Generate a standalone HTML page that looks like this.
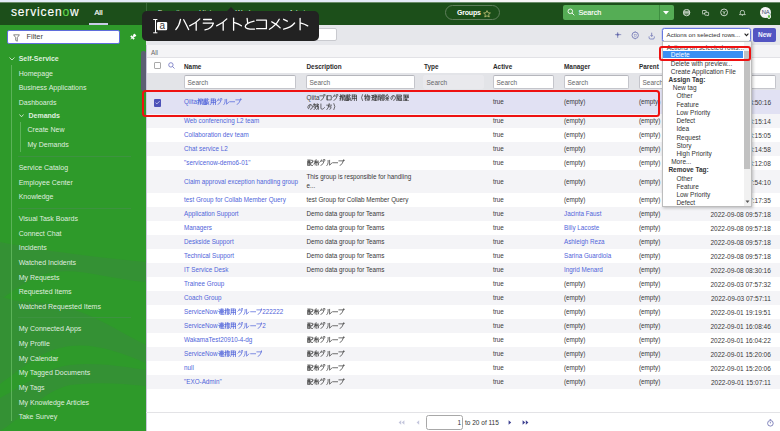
<!DOCTYPE html>
<html><head><meta charset="utf-8">
<style>
*{margin:0;padding:0;box-sizing:border-box}
html,body{width:780px;height:431px;overflow:hidden;background:#fff;font-family:"Liberation Sans",sans-serif}
.a{position:absolute;white-space:nowrap}
#top{left:0;top:0;width:780px;height:2px;background:linear-gradient(90deg,#e5ecf8 0,#e5ecf8 460px,#f7f7f7 460px)}
#hdr{left:0;top:2px;width:780px;height:23px;background:#1c4f1a}
#side{left:0;top:25px;width:146px;height:406px;background:#2e9a2a;overflow:hidden}
.si{position:absolute;left:18.7px;margin-top:.7px;font-size:7px;color:rgba(255,255,255,.86);white-space:nowrap;line-height:8px}
#content{left:146px;top:25px;width:634px;height:406px;background:#fff}
.row{position:absolute;left:0;width:634px;height:14px}
.alt{background:#f4f4f7}
.t{position:absolute;font-size:6.3px;letter-spacing:0px;margin-top:.3px;color:#383838;white-space:nowrap;line-height:8px}
.lk{color:#5064da}
.hd{position:absolute;font-size:6.4px;margin-top:.3px;font-weight:bold;color:#2b2b2b;white-space:nowrap;line-height:8px}
.inp{position:absolute;top:50.2px;height:14.2px;background:#fff;border:1px solid #c4c5cb;border-top-color:#b5b6bc;border-radius:2px;font-size:6.5px;color:#666;padding:3.3px 0 0 2.5px;line-height:7px}
.j{font-size:6.5px}
.dd{position:absolute;font-size:6.5px;color:#333;white-space:nowrap;line-height:8px}
</style></head><body>
<div id="top" class="a"></div>
<div class="a" style="left:0;top:2px;width:780px;height:1px;background:#6a8c69;z-index:1"></div>
<div id="hdr" class="a">
  <div class="a" style="left:11px;top:2.9px;font-size:12px;font-weight:normal;-webkit-text-stroke:.12px #fff;color:#fff;line-height:14px;letter-spacing:.85px">servicen<span style="color:#62d84e;-webkit-text-stroke:.12px #62d84e">o</span>w</div>
  <div class="a" style="left:94.5px;top:7px;font-size:7.2px;color:#fff;line-height:8px;-webkit-text-stroke:.2px #fff">All</div>
  <div class="a" style="left:89px;top:21px;width:19px;height:2px;background:#c9cbe8"></div>
  <div class="a" style="left:146px;top:0;width:1px;height:23px;background:#3a6a38"></div>
  <div class="a" style="left:157.8px;top:6.5px;font-size:7.2px;color:#d5e0d5;line-height:8px">Favorites</div><div class="a" style="left:199px;top:6.5px;font-size:7.2px;color:#d5e0d5;line-height:8px">History</div><div class="a" style="left:235.6px;top:6.5px;font-size:7.2px;color:#d5e0d5;line-height:8px">Workspaces</div><div class="a" style="left:288.7px;top:6.5px;font-size:7.2px;color:#d5e0d5;line-height:8px">Admin</div>
  <div class="a" style="left:445px;top:3px;width:55px;height:14.5px;border:1px solid #5f7f5c;border-radius:8px"></div>
  <div class="a" style="left:457px;top:6px;font-size:7px;font-weight:bold;color:#fff;line-height:9px;letter-spacing:-.2px">Groups</div>
  <svg class="a" style="left:483px;top:8px" width="8" height="8" viewBox="0 0 8 8"><path d="M4 .6l1 2.2 2.4.2-1.8 1.6.6 2.4L4 5.8 1.8 7l.6-2.4L.6 3l2.4-.2z" fill="none" stroke="#c9c77a" stroke-width=".8"/></svg>
  <div class="a" style="left:562.5px;top:3px;width:111px;height:14.5px;background:#55ad55;border-radius:2px"></div>
  <div class="a" style="left:659px;top:3px;width:1px;height:14.5px;background:#3f8f41"></div>
  <svg class="a" style="left:567px;top:6px" width="8" height="8" viewBox="0 0 8 8"><circle cx="3.3" cy="3.3" r="2.3" fill="none" stroke="#fff" stroke-width=".9"/><path d="M5 5l2.3 2.3" stroke="#fff" stroke-width=".9"/></svg>
  <div class="a" style="left:578.5px;top:6px;font-size:7.2px;color:#fff;line-height:9px;-webkit-text-stroke:.15px #fff">Search</div>
  <svg class="a" style="left:663px;top:9px" width="6" height="4" viewBox="0 0 6 4"><path d="M0 0h6L3 3.5z" fill="#fff"/></svg>
  <svg class="a" style="left:683px;top:6.8px" width="8" height="8" viewBox="0 0 8 8"><circle cx="3.6" cy="3.6" r="3.2" fill="none" stroke="#fff" stroke-width=".75"/><path d="M.7 2.3h5.8M.4 3.6h6.4M.7 4.9h5.8" stroke="#fff" stroke-width=".7"/></svg>
  <svg class="a" style="left:701.8px;top:7.6px" width="8" height="7" viewBox="0 0 8 7"><path d="M.8.5h3a.4.4 0 0 1 .4.4v2.2a.4.4 0 0 1-.4.4H1.9l-.8.8v-.8H.8a.4.4 0 0 1-.4-.4V.9a.4.4 0 0 1 .4-.4z" fill="none" stroke="#fff" stroke-width=".65"/><path d="M3.2 2.3h3a.4.4 0 0 1 .4.4v2.1a.4.4 0 0 1-.4.4h-.1v.8l-.8-.8H3.2a.4.4 0 0 1-.4-.4V2.7a.4.4 0 0 1 .4-.4z" fill="#1c4f1a" stroke="#fff" stroke-width=".65"/></svg>
  <svg class="a" style="left:719.5px;top:6px" width="8.5" height="9" viewBox="0 0 8.5 9"><circle cx="4.1" cy="4.4" r="3.4" fill="none" stroke="#fff" stroke-width=".75"/><path d="M2.8 3.1l1.3 1.7 1.3-1.7M4.1 4.8v1.5" fill="none" stroke="#fff" stroke-width=".7"/></svg>
  <svg class="a" style="left:738.6px;top:7.6px" width="7" height="6" viewBox="0 0 7 6"><path d="M.5 4.6h5.8L5.5 3.8V2.4A2 2 0 0 0 1.3 2.4v1.4z" fill="none" stroke="#fff" stroke-width=".65"/><path d="M2.8 5.4h1.2" stroke="#fff" stroke-width=".55"/></svg>
  <div class="a" style="left:760px;top:4.5px;width:11px;height:11px;border-radius:50%;background:#f4f4f6"></div>
  <div class="a" style="left:760.5px;top:7.3px;font-size:5.8px;color:#3a4866;line-height:6px;width:10px;text-align:center;letter-spacing:-.2px">NA</div>
  <div class="a" style="left:766.6px;top:12.4px;width:4.2px;height:4.2px;border-radius:50%;background:#62bf48;border:.5px solid #e8f3e8"></div>
</div>

<div id="side" class="a">
  <svg class="a" style="left:0;top:0" width="146" height="406" viewBox="0 25 146 406">
    <g fill="#3a8a3d" opacity=".55">
    <path d="M0 242 C25 247 70 255 146 262 L146 282 C110 279 80 268 55 272 C30 276 15 290 0 300 Z"/>
    <path d="M0 296 C10 300 20 302 30 302 C50 303 60 306 75 310 C100 318 125 335 146 345 L146 363 C120 352 95 343 70 346 C40 350 20 370 0 384 Z"/>
    <path d="M0 398 C25 385 45 368 70 365 C95 362 120 366 146 370 L146 386 C120 383 95 382 70 385 C40 392 20 420 0 431 Z"/>
    </g>
  </svg>
  <div class="a" style="left:7.4px;top:5.2px;width:112.9px;height:14.3px;background:#fff;border:1px solid #5f6ddb;border-radius:2px"></div>
  <svg class="a" style="left:13.3px;top:8.8px" width="7" height="8" viewBox="0 0 7 8"><path d="M.6 .8h5.8L4.3 3.6v3.6L2.7 6.4V3.6z" fill="none" stroke="#555" stroke-width=".7"/></svg>
  <div class="a" style="left:26.5px;top:8.3px;font-size:7.4px;color:#3e3e3e;line-height:8px">Filter</div>
  <svg class="a" style="left:129px;top:8px" width="8" height="8" viewBox="0 0 8 8"><g transform="rotate(45 4 4)" fill="#fff"><rect x="2.6" y=".6" width="2.8" height="2.4" rx=".3"/><rect x="3.3" y="2.8" width="1.4" height="1.2"/><rect x="1.7" y="3.8" width="4.6" height="1.8" rx=".3"/><rect x="3.7" y="5.5" width=".6" height="1.8"/></g></svg>
  <div class="a" style="left:141px;top:25.5px;width:4.5px;height:40px;background:#5c5f73;border-radius:2px"></div>
  <svg class="a" style="left:9px;top:31.5px" width="6" height="4" viewBox="0 0 6 4"><path d="M.5 .5L3 3 5.5 .5" fill="none" stroke="#e8f2e8" stroke-width=".8"/></svg>
  <div class="si" style="top:29px;font-weight:bold">Self-Service</div>
  <div class="a" style="left:11px;top:40px;width:1px;height:356px;background:#5bb358"></div>
  <div class="si" style="top:44px">Homepage</div>
  <div class="si" style="top:58.5px">Business Applications</div>
  <div class="si" style="top:73px">Dashboards</div>
  <svg class="a" style="left:19px;top:89px" width="5" height="4" viewBox="0 0 5 4"><path d="M.5 .5L2.5 2.8 4.5 .5" fill="none" stroke="#e8f2e8" stroke-width=".8"/></svg>
  <div class="si" style="left:28.5px;top:86.5px;font-weight:bold">Demands</div>
  <div class="a" style="left:20px;top:97px;width:1px;height:29.5px;background:#5bb358"></div>
  <div class="si" style="left:27.5px;top:100.5px">Create New</div>
  <div class="si" style="left:27.5px;top:115.5px">My Demands</div>
  <div class="si" style="top:138px">Service Catalog</div>
  <div class="si" style="top:153px">Employee Center</div>
  <div class="si" style="top:167.5px">Knowledge</div>
  <div class="a" style="left:18px;top:130.5px;width:113px;height:1px;background:#3d9340"></div>
  <div class="a" style="left:18px;top:182.5px;width:113px;height:1px;background:#3d9340"></div>
  <div class="si" style="top:189.5px">Visual Task Boards</div>
  <div class="si" style="top:204px">Connect Chat</div>
  <div class="si" style="top:218.5px">Incidents</div>
  <div class="si" style="top:233px">Watched Incidents</div>
  <div class="si" style="top:248px">My Requests</div>
  <div class="si" style="top:262.5px">Requested Items</div>
  <div class="si" style="top:277px">Watched Requested Items</div>
  <div class="a" style="left:18px;top:292px;width:113px;height:1px;background:#3d9340"></div>
  <div class="si" style="top:299.5px">My Connected Apps</div>
  <div class="si" style="top:314.5px">My Profile</div>
  <div class="si" style="top:329px">My Calendar</div>
  <div class="si" style="top:343.5px">My Tagged Documents</div>
  <div class="si" style="top:358.5px">My Tags</div>
  <div class="si" style="top:373px">My Knowledge Articles</div>
  <div class="si" style="top:387.5px">Take Survey</div>
</div>

<div id="content" class="a">
  <!-- toolbar -->
  <div class="a" style="left:0;top:0;width:634px;height:20px;background:#e6e7eb"></div>
  <div class="a" style="left:78px;top:2.5px;width:112.5px;height:13.8px;background:#fff;border:1px solid #c9cacf;border-radius:2px"></div>
  <!-- breadcrumb -->
  <div class="a" style="left:0;top:20px;width:634px;height:13px;background:#f4f4f6;border-bottom:1px solid #e2e2e6"></div>
  <div class="t" style="left:5px;top:23.5px;color:#666">All</div>
  <!-- header row -->
  <div class="a" style="left:0;top:33px;width:634px;height:15px;background:#fff"></div>
  <div class="a" style="left:8px;top:37px;width:7px;height:7px;border:1px solid #aaa;border-radius:1px;background:#fff"></div>
  <svg class="a" style="left:22px;top:37px" width="7" height="7" viewBox="0 0 7 7"><circle cx="2.9" cy="2.9" r="2.2" fill="none" stroke="#6b6fbf" stroke-width=".8"/><path d="M4.5 4.5L6.5 6.5" stroke="#6b6fbf" stroke-width=".8"/></svg>
  <div class="hd" style="left:38px;top:37.5px">Name</div>
  <div class="hd" style="left:160.5px;top:37.5px">Description</div>
  <div class="hd" style="left:278px;top:37.5px">Type</div>
  <div class="hd" style="left:347px;top:37.5px">Active</div>
  <div class="hd" style="left:418px;top:37.5px">Manager</div>
  <div class="hd" style="left:493px;top:37.5px">Parent</div>
  <!-- search row -->
  <div class="a" style="left:0;top:48px;width:634px;height:17px;background:#e3e4e8"></div>
  <div class="inp" style="left:38px;width:112px">Search</div>
  <div class="inp" style="left:160px;width:109px">Search</div>
  <div class="inp" style="left:277px;width:60.5px;background:#e9e9ed;border-color:#e9e9ed">Search</div>
  <div class="inp" style="left:347px;width:61px">Search</div>
  <div class="inp" style="left:418px;width:65px">Search</div>
  <div class="inp" style="left:493px;width:64px">Search</div>
  <div class="inp" style="left:564px;width:65.7px">Search</div>

  <!-- selected row -->
  <div class="row" style="top:65px;height:24px;background:#e1e1f3"></div>
  <div class="a" style="left:7.8px;top:74px;width:7.5px;height:7.7px;background:#4c50b8;border-radius:1px"></div>
  <svg class="a" style="left:8px;top:74.3px" width="7" height="7" viewBox="0 0 7 7"><path d="M1.6 3.7L2.9 4.9 5.6 2.2" fill="none" stroke="#d8dbf5" stroke-width=".8"/></svg>
  <div class="t lk" style="left:38px;top:73px">Qiita<svg width="6.4" height="7.2" viewBox="0 0 10 10" preserveAspectRatio="none" style="vertical-align:-.9px"><path d="M1 3.5H3.6M2.3 1V8.8Q2.3 9.2 1.6 9.1M1 6.6L3.6 5.5M4.6 1.4H8.6V4.2H4.6ZM4.6 2.8H8.6M5.2 4.2L4.6 5.6H9M5.2 5.6V9.2M5.2 7.2H8.4V9.2" fill="none" stroke="currentColor" stroke-width="1.05" stroke-linecap="round" stroke-linejoin="round"/></svg><svg width="6.4" height="7.2" viewBox="0 0 10 10" preserveAspectRatio="none" style="vertical-align:-.9px"><path d="M1 1.8H6M3.5 .8V3.6M1 3.6H6M1.6 4.8H5.4V8.4H1.6ZM1.6 6.6H5.4M3.5 4.8V9.4M6.6 .8Q6.8 6 9 9.2M9 5.2L5.6 9.2M8 1.2L9 2.2M.8 9.2L6 8.4" fill="none" stroke="currentColor" stroke-width="1.05" stroke-linecap="round" stroke-linejoin="round"/></svg><svg width="6.4" height="7.2" viewBox="0 0 10 10" preserveAspectRatio="none" style="vertical-align:-.9px"><path d="M2 1.4H8.6V9.2M2 1.4V6Q2 8 1 9.2M2 3.8H8.6M2 6.3H8.6M5.3 1.4V9.2" fill="none" stroke="currentColor" stroke-width="1.05" stroke-linecap="round" stroke-linejoin="round"/></svg><svg width="6.4" height="7.2" viewBox="0 0 10 10" preserveAspectRatio="none" style="vertical-align:-.9px"><path d="M4 1.2Q3.2 3.3 1.3 4.6M3.6 2.8H8Q7.6 6.8 2.8 9.2M7.3.6l.6 1.3M8.7.4l.6 1.3" fill="none" stroke="currentColor" stroke-width="1.05" stroke-linecap="round" stroke-linejoin="round"/></svg><svg width="6.4" height="7.2" viewBox="0 0 10 10" preserveAspectRatio="none" style="vertical-align:-.9px"><path d="M3.3 2V5Q3.1 7.6 1.3 9.2M5.6 1.8V8.6Q7.6 7.6 9 5.6" fill="none" stroke="currentColor" stroke-width="1.05" stroke-linecap="round" stroke-linejoin="round"/></svg><svg width="6.4" height="7.2" viewBox="0 0 10 10" preserveAspectRatio="none" style="vertical-align:-.9px"><path d="M1 5.2H9" fill="none" stroke="currentColor" stroke-width="1.05" stroke-linecap="round" stroke-linejoin="round"/></svg><svg width="6.4" height="7.2" viewBox="0 0 10 10" preserveAspectRatio="none" style="vertical-align:-.9px"><path d="M1.3 2.6H8.2Q7.8 6.8 3 9.2M9 1.3a.75.75 0 1 0 .01 0" fill="none" stroke="currentColor" stroke-width="1.05" stroke-linecap="round" stroke-linejoin="round"/></svg></div>
  <div class="t" style="left:160.5px;top:69px">Qiita<svg width="6.4" height="7.2" viewBox="0 0 10 10" preserveAspectRatio="none" style="vertical-align:-.9px"><path d="M1.3 2.6H8Q7.6 6.8 2.8 9.2M7.6.6l.6 1.3M9 .4l.6 1.3" fill="none" stroke="currentColor" stroke-width="1.05" stroke-linecap="round" stroke-linejoin="round"/></svg><svg width="6.4" height="7.2" viewBox="0 0 10 10" preserveAspectRatio="none" style="vertical-align:-.9px"><path d="M2 2.4H8.2V8.2H2ZM2 2.4V8.2" fill="none" stroke="currentColor" stroke-width="1.05" stroke-linecap="round" stroke-linejoin="round"/></svg><svg width="6.4" height="7.2" viewBox="0 0 10 10" preserveAspectRatio="none" style="vertical-align:-.9px"><path d="M4 1.2Q3.2 3.3 1.3 4.6M3.6 2.8H8Q7.6 6.8 2.8 9.2M7.3.6l.6 1.3M8.7.4l.6 1.3" fill="none" stroke="currentColor" stroke-width="1.05" stroke-linecap="round" stroke-linejoin="round"/></svg><svg width="6.4" height="7.2" viewBox="0 0 10 10" preserveAspectRatio="none" style="vertical-align:-.9px"><path d="M1 3.5H3.6M2.3 1V8.8Q2.3 9.2 1.6 9.1M1 6.6L3.6 5.5M4.6 1.4H8.6V4.2H4.6ZM4.6 2.8H8.6M5.2 4.2L4.6 5.6H9M5.2 5.6V9.2M5.2 7.2H8.4V9.2" fill="none" stroke="currentColor" stroke-width="1.05" stroke-linecap="round" stroke-linejoin="round"/></svg><svg width="6.4" height="7.2" viewBox="0 0 10 10" preserveAspectRatio="none" style="vertical-align:-.9px"><path d="M1 1.8H6M3.5 .8V3.6M1 3.6H6M1.6 4.8H5.4V8.4H1.6ZM1.6 6.6H5.4M3.5 4.8V9.4M6.6 .8Q6.8 6 9 9.2M9 5.2L5.6 9.2M8 1.2L9 2.2M.8 9.2L6 8.4" fill="none" stroke="currentColor" stroke-width="1.05" stroke-linecap="round" stroke-linejoin="round"/></svg><svg width="6.4" height="7.2" viewBox="0 0 10 10" preserveAspectRatio="none" style="vertical-align:-.9px"><path d="M2 1.4H8.6V9.2M2 1.4V6Q2 8 1 9.2M2 3.8H8.6M2 6.3H8.6M5.3 1.4V9.2" fill="none" stroke="currentColor" stroke-width="1.05" stroke-linecap="round" stroke-linejoin="round"/></svg><svg width="6.4" height="7.2" viewBox="0 0 10 10" preserveAspectRatio="none" style="vertical-align:-.9px"><path d="M7 .8Q3.8 5 7 9.2" fill="none" stroke="currentColor" stroke-width="1.05" stroke-linecap="round" stroke-linejoin="round"/></svg><svg width="6.4" height="7.2" viewBox="0 0 10 10" preserveAspectRatio="none" style="vertical-align:-.9px"><path d="M2.6 .8V9.4M1 4H4.2M1 6.8L4.2 5.6M1.6 1.8Q1.6 3 1 3.6M5.6 .8Q5.2 2.8 4.6 4M5.2 2.8H9.2Q9.2 8 8 9.2M6.6 2.8Q6.6 6 5 8.6M7.9 2.8Q7.9 7 6.4 9.2" fill="none" stroke="currentColor" stroke-width="1.05" stroke-linecap="round" stroke-linejoin="round"/></svg><svg width="6.4" height="7.2" viewBox="0 0 10 10" preserveAspectRatio="none" style="vertical-align:-.9px"><path d="M1 2H4M1 5H4M2.5 2V8M1 8.6L4 7.6M4.8 1.4H8.8V5.6H4.8ZM4.8 3.5H8.8M6.8 1.4V9.2M5 7.2H8.6M4.4 9.2H9.2" fill="none" stroke="currentColor" stroke-width="1.05" stroke-linecap="round" stroke-linejoin="round"/></svg><svg width="6.4" height="7.2" viewBox="0 0 10 10" preserveAspectRatio="none" style="vertical-align:-.9px"><path d="M3.4 .8V2.6M1.6 1.2L2 2.6M5.4 1.2L5 2.6M1.6 3.6H5.4V9.2M1.6 3.6V9.4M1.6 5.4H5.4M1.6 7.2H5.4M7 1.8V7M8.8 .8V9Q8.8 9.6 7.6 9.3" fill="none" stroke="currentColor" stroke-width="1.05" stroke-linecap="round" stroke-linejoin="round"/></svg><svg width="6.4" height="7.2" viewBox="0 0 10 10" preserveAspectRatio="none" style="vertical-align:-.9px"><path d="M1 1.4H3Q3.6 3 2.2 4.6Q3.6 5.6 2.6 7.6M1 1.4V9.6M6.6 .8L4 4M6.6 .8L9.2 4M5 4.6H8.2M4.4 6.2H8.8M6.6 4.6V9.6M5.4 7.6L4.4 8.8M7.8 7.6L8.8 8.8" fill="none" stroke="currentColor" stroke-width="1.05" stroke-linecap="round" stroke-linejoin="round"/></svg><svg width="6.4" height="7.2" viewBox="0 0 10 10" preserveAspectRatio="none" style="vertical-align:-.9px"><path d="M5 2.4Q4 7.4 2.4 7.9Q1.1 7.8 1.4 5.2Q2.3 2.2 5.6 2.2Q8.8 2.6 8.6 5.6Q8.2 8.6 5.4 8.9" fill="none" stroke="currentColor" stroke-width="1.05" stroke-linecap="round" stroke-linejoin="round"/></svg><svg width="6.4" height="7.2" viewBox="0 0 10 10" preserveAspectRatio="none" style="vertical-align:-.9px"><path d="M1.4 1.4H8.6V3H1.4M1.4 1.4V6Q1.4 8 1 9.6M3 4L2.4 6M3 5V9.4M4.4 4H8.8M4.6 5.4H8.4V8.4H4.6ZM4.6 6.9H8.4M4.4 9.4L9.2 9" fill="none" stroke="currentColor" stroke-width="1.05" stroke-linecap="round" stroke-linejoin="round"/></svg><svg width="6.4" height="7.2" viewBox="0 0 10 10" preserveAspectRatio="none" style="vertical-align:-.9px"><path d="M1.4 1.4H9.2M1.4 1.4V6Q1.4 8 1 9.6M2.4 3H5.4M3.9 2.4V5.6M3.6 4L2.4 5.6M4.2 4L5.4 5.2M6 3H9M7.5 2.4V5.6M7.2 4L6 5.6M7.8 4L9 5.2M3.6 6.6V9.2M3.6 7.6H6M5.6 6.6V9.4M2.4 9.4H9.2" fill="none" stroke="currentColor" stroke-width="1.05" stroke-linecap="round" stroke-linejoin="round"/></svg></div>
  <div class="t" style="left:160.5px;top:78px"><svg width="6.4" height="7.2" viewBox="0 0 10 10" preserveAspectRatio="none" style="vertical-align:-.9px"><path d="M5 2.4Q4 7.4 2.4 7.9Q1.1 7.8 1.4 5.2Q2.3 2.2 5.6 2.2Q8.8 2.6 8.6 5.6Q8.2 8.6 5.4 8.9" fill="none" stroke="currentColor" stroke-width="1.05" stroke-linecap="round" stroke-linejoin="round"/></svg><svg width="6.4" height="7.2" viewBox="0 0 10 10" preserveAspectRatio="none" style="vertical-align:-.9px"><path d="M1 2H4.6M2 .8Q2 5 1 5.6M2 4H4.6Q4.2 7.6 1.4 9.6M2.6 6.2L4 7.6M5 3H8.6M5 5H9.2M6.6 1.2Q6.8 6 9 9.2M9 6L5.4 9.6M8 1.4L9 2.4" fill="none" stroke="currentColor" stroke-width="1.05" stroke-linecap="round" stroke-linejoin="round"/></svg><svg width="6.4" height="7.2" viewBox="0 0 10 10" preserveAspectRatio="none" style="vertical-align:-.9px"><path d="M3 1.3V7Q3.2 9 5.4 8.6Q7.4 8.1 8.6 6.4" fill="none" stroke="currentColor" stroke-width="1.05" stroke-linecap="round" stroke-linejoin="round"/></svg><svg width="6.4" height="7.2" viewBox="0 0 10 10" preserveAspectRatio="none" style="vertical-align:-.9px"><path d="M5 .8V2.4M1 3H9M4.2 3Q4.2 7 1.4 9.2M4.2 5.2H8Q8 8.6 6 8.9" fill="none" stroke="currentColor" stroke-width="1.05" stroke-linecap="round" stroke-linejoin="round"/></svg><svg width="6.4" height="7.2" viewBox="0 0 10 10" preserveAspectRatio="none" style="vertical-align:-.9px"><path d="M3 .8Q6.2 5 3 9.2" fill="none" stroke="currentColor" stroke-width="1.05" stroke-linecap="round" stroke-linejoin="round"/></svg></div>
  <div class="t" style="left:347px;top:73px">true</div>
  <div class="t" style="left:418px;top:73px">(empty)</div>
  <div class="t" style="left:493px;top:73px">(empty)</div>
  <div class="t" style="left:564px;top:73px;width:61px;text-align:right;font-size:6.5px;margin-top:1px">2022-09-08 08:50:16</div>

  <div id="rows">
  <div class="row alt" style="top:89px;height:14px"></div>
  <div class="t lk" style="left:38px;top:92.0px">Web conferencing L2 team</div>
  <div class="t" style="left:347px;top:92.0px">true</div>
  <div class="t" style="left:418px;top:92.0px">(empty)</div>
  <div class="t" style="left:493px;top:92.0px">(empty)</div>
  <div class="t" style="left:544px;top:92.0px;width:80.8px;text-align:right;font-size:6.5px;margin-top:1px">2022-09-08 08:15:14</div>
  <div class="row" style="top:103px;height:14px"></div>
  <div class="t lk" style="left:38px;top:106.0px">Collaboration dev team</div>
  <div class="t" style="left:347px;top:106.0px">true</div>
  <div class="t" style="left:418px;top:106.0px">(empty)</div>
  <div class="t" style="left:493px;top:106.0px">(empty)</div>
  <div class="t" style="left:544px;top:106.0px;width:80.8px;text-align:right;font-size:6.5px;margin-top:1px">2022-09-08 08:15:05</div>
  <div class="row alt" style="top:117px;height:14px"></div>
  <div class="t lk" style="left:38px;top:120.0px">Chat service L2</div>
  <div class="t" style="left:347px;top:120.0px">true</div>
  <div class="t" style="left:418px;top:120.0px">(empty)</div>
  <div class="t" style="left:493px;top:120.0px">(empty)</div>
  <div class="t" style="left:544px;top:120.0px;width:80.8px;text-align:right;font-size:6.5px;margin-top:1px">2022-09-08 08:14:58</div>
  <div class="row" style="top:131px;height:14px"></div>
  <div class="t lk" style="left:38px;top:134.0px">"servicenow-demo6-01"</div>
  <div class="t" style="left:160.5px;top:134.0px"><svg width="6.4" height="7.2" viewBox="0 0 10 10" preserveAspectRatio="none" style="vertical-align:-.9px"><path d="M1 1.4H5M1.6 2.8H4.6V9.2H1.6ZM2.6 2.8V5.4M3.6 2.8V5.4M1.6 5.4H4.6M1.6 7.2H4.6M6 1.8H8.6V5H6V8.6Q6 9.2 9.2 9.2" fill="none" stroke="currentColor" stroke-width="1.05" stroke-linecap="round" stroke-linejoin="round"/></svg><svg width="6.4" height="7.2" viewBox="0 0 10 10" preserveAspectRatio="none" style="vertical-align:-.9px"><path d="M1 3H9M5 .8Q4 5 1.4 7.2M3.4 5H8.6V8.2M3.4 5V8.4M6 3.6V9.6" fill="none" stroke="currentColor" stroke-width="1.05" stroke-linecap="round" stroke-linejoin="round"/></svg><svg width="6.4" height="7.2" viewBox="0 0 10 10" preserveAspectRatio="none" style="vertical-align:-.9px"><path d="M4 1.2Q3.2 3.3 1.3 4.6M3.6 2.8H8Q7.6 6.8 2.8 9.2M7.3.6l.6 1.3M8.7.4l.6 1.3" fill="none" stroke="currentColor" stroke-width="1.05" stroke-linecap="round" stroke-linejoin="round"/></svg><svg width="6.4" height="7.2" viewBox="0 0 10 10" preserveAspectRatio="none" style="vertical-align:-.9px"><path d="M3.3 2V5Q3.1 7.6 1.3 9.2M5.6 1.8V8.6Q7.6 7.6 9 5.6" fill="none" stroke="currentColor" stroke-width="1.05" stroke-linecap="round" stroke-linejoin="round"/></svg><svg width="6.4" height="7.2" viewBox="0 0 10 10" preserveAspectRatio="none" style="vertical-align:-.9px"><path d="M1 5.2H9" fill="none" stroke="currentColor" stroke-width="1.05" stroke-linecap="round" stroke-linejoin="round"/></svg><svg width="6.4" height="7.2" viewBox="0 0 10 10" preserveAspectRatio="none" style="vertical-align:-.9px"><path d="M1.3 2.6H8.2Q7.8 6.8 3 9.2M9 1.3a.75.75 0 1 0 .01 0" fill="none" stroke="currentColor" stroke-width="1.05" stroke-linecap="round" stroke-linejoin="round"/></svg></div>
  <div class="t" style="left:347px;top:134.0px">true</div>
  <div class="t" style="left:418px;top:134.0px">(empty)</div>
  <div class="t" style="left:493px;top:134.0px">(empty)</div>
  <div class="t" style="left:544px;top:134.0px;width:80.8px;text-align:right;font-size:6.5px;margin-top:1px">2022-09-08 08:12:08</div>
  <div class="row alt" style="top:145px;height:23px"></div>
  <div class="t lk" style="left:38px;top:152.5px">Claim approval exception handling group</div>
  <div class="t" style="left:160.5px;top:148px">This group is responsible for handling</div>
  <div class="t" style="left:160.5px;top:157px">e...</div>
  <div class="t" style="left:347px;top:152.5px">true</div>
  <div class="t" style="left:418px;top:152.5px">(empty)</div>
  <div class="t" style="left:493px;top:152.5px">(empty)</div>
  <div class="t" style="left:544px;top:152.5px;width:80.8px;text-align:right;font-size:6.5px;margin-top:1px">2022-09-08 07:54:10</div>
  <div class="row" style="top:168px;height:14px"></div>
  <div class="t lk" style="left:38px;top:171.0px">test Group for Collab Member Query</div>
  <div class="t" style="left:160.5px;top:171.0px">test Group for Collab Member Query</div>
  <div class="t" style="left:347px;top:171.0px">true</div>
  <div class="t" style="left:418px;top:171.0px">(empty)</div>
  <div class="t" style="left:493px;top:171.0px">(empty)</div>
  <div class="t" style="left:544px;top:171.0px;width:80.8px;text-align:right;font-size:6.5px;margin-top:1px">2022-09-08 07:17:35</div>
  <div class="row alt" style="top:182px;height:14px"></div>
  <div class="t lk" style="left:38px;top:185.0px">Application Support</div>
  <div class="t" style="left:160.5px;top:185.0px">Demo data group for Teams</div>
  <div class="t" style="left:347px;top:185.0px">true</div>
  <div class="t lk" style="left:418px;top:185.0px">Jacinta Faust</div>
  <div class="t" style="left:493px;top:185.0px">(empty)</div>
  <div class="t" style="left:544px;top:185.0px;width:80.8px;text-align:right;font-size:6.5px;margin-top:1px">2022-09-08 09:57:18</div>
  <div class="row" style="top:196px;height:14px"></div>
  <div class="t lk" style="left:38px;top:199.0px">Managers</div>
  <div class="t" style="left:160.5px;top:199.0px">Demo data group for Teams</div>
  <div class="t" style="left:347px;top:199.0px">true</div>
  <div class="t lk" style="left:418px;top:199.0px">Billy Lacoste</div>
  <div class="t" style="left:493px;top:199.0px">(empty)</div>
  <div class="t" style="left:544px;top:199.0px;width:80.8px;text-align:right;font-size:6.5px;margin-top:1px">2022-09-08 09:57:18</div>
  <div class="row alt" style="top:210px;height:14px"></div>
  <div class="t lk" style="left:38px;top:213.0px">Deskside Support</div>
  <div class="t" style="left:160.5px;top:213.0px">Demo data group for Teams</div>
  <div class="t" style="left:347px;top:213.0px">true</div>
  <div class="t lk" style="left:418px;top:213.0px">Ashleigh Reza</div>
  <div class="t" style="left:493px;top:213.0px">(empty)</div>
  <div class="t" style="left:544px;top:213.0px;width:80.8px;text-align:right;font-size:6.5px;margin-top:1px">2022-09-08 09:57:18</div>
  <div class="row" style="top:224px;height:14px"></div>
  <div class="t lk" style="left:38px;top:227.0px">Technical Support</div>
  <div class="t" style="left:160.5px;top:227.0px">Demo data group for Teams</div>
  <div class="t" style="left:347px;top:227.0px">true</div>
  <div class="t lk" style="left:418px;top:227.0px">Sarina Guardiola</div>
  <div class="t" style="left:493px;top:227.0px">(empty)</div>
  <div class="t" style="left:544px;top:227.0px;width:80.8px;text-align:right;font-size:6.5px;margin-top:1px">2022-09-08 09:57:18</div>
  <div class="row alt" style="top:238px;height:14px"></div>
  <div class="t lk" style="left:38px;top:241.0px">IT Service Desk</div>
  <div class="t" style="left:160.5px;top:241.0px">Demo data group for Teams</div>
  <div class="t" style="left:347px;top:241.0px">true</div>
  <div class="t lk" style="left:418px;top:241.0px">Ingrid Menard</div>
  <div class="t" style="left:493px;top:241.0px">(empty)</div>
  <div class="t" style="left:544px;top:241.0px;width:80.8px;text-align:right;font-size:6.5px;margin-top:1px">2022-09-08 08:30:16</div>
  <div class="row" style="top:252px;height:14px"></div>
  <div class="t lk" style="left:38px;top:255.0px">Trainee Group</div>
  <div class="t" style="left:347px;top:255.0px">true</div>
  <div class="t" style="left:418px;top:255.0px">(empty)</div>
  <div class="t" style="left:493px;top:255.0px">(empty)</div>
  <div class="t" style="left:544px;top:255.0px;width:80.8px;text-align:right;font-size:6.5px;margin-top:1px">2022-09-03 07:57:32</div>
  <div class="row alt" style="top:266px;height:14px"></div>
  <div class="t lk" style="left:38px;top:269.0px">Coach Group</div>
  <div class="t" style="left:347px;top:269.0px">true</div>
  <div class="t" style="left:418px;top:269.0px">(empty)</div>
  <div class="t" style="left:493px;top:269.0px">(empty)</div>
  <div class="t" style="left:544px;top:269.0px;width:80.8px;text-align:right;font-size:6.5px;margin-top:1px">2022-09-03 07:57:11</div>
  <div class="row" style="top:280px;height:14px"></div>
  <div class="t lk" style="left:38px;top:283.0px">ServiceNow<svg width="6.4" height="7.2" viewBox="0 0 10 10" preserveAspectRatio="none" style="vertical-align:-.9px"><path d="M1.6 1.6L2.6 2.8M1 4.8H2.6V8Q3 9.2 9.2 9M3.6 1.8H8.6M6.1 .8V8.2M3.8 3.3H8.4V5.8H3.8ZM3.8 4.55H8.4M3.4 6.9H8.8" fill="none" stroke="currentColor" stroke-width="1.05" stroke-linecap="round" stroke-linejoin="round"/></svg><svg width="6.4" height="7.2" viewBox="0 0 10 10" preserveAspectRatio="none" style="vertical-align:-.9px"><path d="M1 3.5H3.6M2.3 1V8.8Q2.3 9.2 1.6 9.1M1 6.6L3.6 5.5M5 .8L4.4 2.8M5 2.3H9M6.2 .8V5.6M5 3.8H9M5 5.6H9M4.8 7H8.6Q8.2 9.6 6.2 9.2M6.6 7Q6.2 9 4.4 9.6" fill="none" stroke="currentColor" stroke-width="1.05" stroke-linecap="round" stroke-linejoin="round"/></svg><svg width="6.4" height="7.2" viewBox="0 0 10 10" preserveAspectRatio="none" style="vertical-align:-.9px"><path d="M2 1.4H8.6V9.2M2 1.4V6Q2 8 1 9.2M2 3.8H8.6M2 6.3H8.6M5.3 1.4V9.2" fill="none" stroke="currentColor" stroke-width="1.05" stroke-linecap="round" stroke-linejoin="round"/></svg><svg width="6.4" height="7.2" viewBox="0 0 10 10" preserveAspectRatio="none" style="vertical-align:-.9px"><path d="M4 1.2Q3.2 3.3 1.3 4.6M3.6 2.8H8Q7.6 6.8 2.8 9.2M7.3.6l.6 1.3M8.7.4l.6 1.3" fill="none" stroke="currentColor" stroke-width="1.05" stroke-linecap="round" stroke-linejoin="round"/></svg><svg width="6.4" height="7.2" viewBox="0 0 10 10" preserveAspectRatio="none" style="vertical-align:-.9px"><path d="M3.3 2V5Q3.1 7.6 1.3 9.2M5.6 1.8V8.6Q7.6 7.6 9 5.6" fill="none" stroke="currentColor" stroke-width="1.05" stroke-linecap="round" stroke-linejoin="round"/></svg><svg width="6.4" height="7.2" viewBox="0 0 10 10" preserveAspectRatio="none" style="vertical-align:-.9px"><path d="M1 5.2H9" fill="none" stroke="currentColor" stroke-width="1.05" stroke-linecap="round" stroke-linejoin="round"/></svg><svg width="6.4" height="7.2" viewBox="0 0 10 10" preserveAspectRatio="none" style="vertical-align:-.9px"><path d="M1.3 2.6H8.2Q7.8 6.8 3 9.2M9 1.3a.75.75 0 1 0 .01 0" fill="none" stroke="currentColor" stroke-width="1.05" stroke-linecap="round" stroke-linejoin="round"/></svg>222222</div>
  <div class="t" style="left:160.5px;top:283.0px"><svg width="6.4" height="7.2" viewBox="0 0 10 10" preserveAspectRatio="none" style="vertical-align:-.9px"><path d="M1 1.4H5M1.6 2.8H4.6V9.2H1.6ZM2.6 2.8V5.4M3.6 2.8V5.4M1.6 5.4H4.6M1.6 7.2H4.6M6 1.8H8.6V5H6V8.6Q6 9.2 9.2 9.2" fill="none" stroke="currentColor" stroke-width="1.05" stroke-linecap="round" stroke-linejoin="round"/></svg><svg width="6.4" height="7.2" viewBox="0 0 10 10" preserveAspectRatio="none" style="vertical-align:-.9px"><path d="M1 3H9M5 .8Q4 5 1.4 7.2M3.4 5H8.6V8.2M3.4 5V8.4M6 3.6V9.6" fill="none" stroke="currentColor" stroke-width="1.05" stroke-linecap="round" stroke-linejoin="round"/></svg><svg width="6.4" height="7.2" viewBox="0 0 10 10" preserveAspectRatio="none" style="vertical-align:-.9px"><path d="M4 1.2Q3.2 3.3 1.3 4.6M3.6 2.8H8Q7.6 6.8 2.8 9.2M7.3.6l.6 1.3M8.7.4l.6 1.3" fill="none" stroke="currentColor" stroke-width="1.05" stroke-linecap="round" stroke-linejoin="round"/></svg><svg width="6.4" height="7.2" viewBox="0 0 10 10" preserveAspectRatio="none" style="vertical-align:-.9px"><path d="M3.3 2V5Q3.1 7.6 1.3 9.2M5.6 1.8V8.6Q7.6 7.6 9 5.6" fill="none" stroke="currentColor" stroke-width="1.05" stroke-linecap="round" stroke-linejoin="round"/></svg><svg width="6.4" height="7.2" viewBox="0 0 10 10" preserveAspectRatio="none" style="vertical-align:-.9px"><path d="M1 5.2H9" fill="none" stroke="currentColor" stroke-width="1.05" stroke-linecap="round" stroke-linejoin="round"/></svg><svg width="6.4" height="7.2" viewBox="0 0 10 10" preserveAspectRatio="none" style="vertical-align:-.9px"><path d="M1.3 2.6H8.2Q7.8 6.8 3 9.2M9 1.3a.75.75 0 1 0 .01 0" fill="none" stroke="currentColor" stroke-width="1.05" stroke-linecap="round" stroke-linejoin="round"/></svg></div>
  <div class="t" style="left:347px;top:283.0px">true</div>
  <div class="t" style="left:418px;top:283.0px">(empty)</div>
  <div class="t" style="left:493px;top:283.0px">(empty)</div>
  <div class="t" style="left:544px;top:283.0px;width:80.8px;text-align:right;font-size:6.5px;margin-top:1px">2022-09-01 19:19:51</div>
  <div class="row alt" style="top:294px;height:14px"></div>
  <div class="t lk" style="left:38px;top:297.0px">ServiceNow<svg width="6.4" height="7.2" viewBox="0 0 10 10" preserveAspectRatio="none" style="vertical-align:-.9px"><path d="M1.6 1.6L2.6 2.8M1 4.8H2.6V8Q3 9.2 9.2 9M3.6 1.8H8.6M6.1 .8V8.2M3.8 3.3H8.4V5.8H3.8ZM3.8 4.55H8.4M3.4 6.9H8.8" fill="none" stroke="currentColor" stroke-width="1.05" stroke-linecap="round" stroke-linejoin="round"/></svg><svg width="6.4" height="7.2" viewBox="0 0 10 10" preserveAspectRatio="none" style="vertical-align:-.9px"><path d="M1 3.5H3.6M2.3 1V8.8Q2.3 9.2 1.6 9.1M1 6.6L3.6 5.5M5 .8L4.4 2.8M5 2.3H9M6.2 .8V5.6M5 3.8H9M5 5.6H9M4.8 7H8.6Q8.2 9.6 6.2 9.2M6.6 7Q6.2 9 4.4 9.6" fill="none" stroke="currentColor" stroke-width="1.05" stroke-linecap="round" stroke-linejoin="round"/></svg><svg width="6.4" height="7.2" viewBox="0 0 10 10" preserveAspectRatio="none" style="vertical-align:-.9px"><path d="M2 1.4H8.6V9.2M2 1.4V6Q2 8 1 9.2M2 3.8H8.6M2 6.3H8.6M5.3 1.4V9.2" fill="none" stroke="currentColor" stroke-width="1.05" stroke-linecap="round" stroke-linejoin="round"/></svg><svg width="6.4" height="7.2" viewBox="0 0 10 10" preserveAspectRatio="none" style="vertical-align:-.9px"><path d="M4 1.2Q3.2 3.3 1.3 4.6M3.6 2.8H8Q7.6 6.8 2.8 9.2M7.3.6l.6 1.3M8.7.4l.6 1.3" fill="none" stroke="currentColor" stroke-width="1.05" stroke-linecap="round" stroke-linejoin="round"/></svg><svg width="6.4" height="7.2" viewBox="0 0 10 10" preserveAspectRatio="none" style="vertical-align:-.9px"><path d="M3.3 2V5Q3.1 7.6 1.3 9.2M5.6 1.8V8.6Q7.6 7.6 9 5.6" fill="none" stroke="currentColor" stroke-width="1.05" stroke-linecap="round" stroke-linejoin="round"/></svg><svg width="6.4" height="7.2" viewBox="0 0 10 10" preserveAspectRatio="none" style="vertical-align:-.9px"><path d="M1 5.2H9" fill="none" stroke="currentColor" stroke-width="1.05" stroke-linecap="round" stroke-linejoin="round"/></svg><svg width="6.4" height="7.2" viewBox="0 0 10 10" preserveAspectRatio="none" style="vertical-align:-.9px"><path d="M1.3 2.6H8.2Q7.8 6.8 3 9.2M9 1.3a.75.75 0 1 0 .01 0" fill="none" stroke="currentColor" stroke-width="1.05" stroke-linecap="round" stroke-linejoin="round"/></svg>2</div>
  <div class="t" style="left:160.5px;top:297.0px"><svg width="6.4" height="7.2" viewBox="0 0 10 10" preserveAspectRatio="none" style="vertical-align:-.9px"><path d="M1 1.4H5M1.6 2.8H4.6V9.2H1.6ZM2.6 2.8V5.4M3.6 2.8V5.4M1.6 5.4H4.6M1.6 7.2H4.6M6 1.8H8.6V5H6V8.6Q6 9.2 9.2 9.2" fill="none" stroke="currentColor" stroke-width="1.05" stroke-linecap="round" stroke-linejoin="round"/></svg><svg width="6.4" height="7.2" viewBox="0 0 10 10" preserveAspectRatio="none" style="vertical-align:-.9px"><path d="M1 3H9M5 .8Q4 5 1.4 7.2M3.4 5H8.6V8.2M3.4 5V8.4M6 3.6V9.6" fill="none" stroke="currentColor" stroke-width="1.05" stroke-linecap="round" stroke-linejoin="round"/></svg><svg width="6.4" height="7.2" viewBox="0 0 10 10" preserveAspectRatio="none" style="vertical-align:-.9px"><path d="M4 1.2Q3.2 3.3 1.3 4.6M3.6 2.8H8Q7.6 6.8 2.8 9.2M7.3.6l.6 1.3M8.7.4l.6 1.3" fill="none" stroke="currentColor" stroke-width="1.05" stroke-linecap="round" stroke-linejoin="round"/></svg><svg width="6.4" height="7.2" viewBox="0 0 10 10" preserveAspectRatio="none" style="vertical-align:-.9px"><path d="M3.3 2V5Q3.1 7.6 1.3 9.2M5.6 1.8V8.6Q7.6 7.6 9 5.6" fill="none" stroke="currentColor" stroke-width="1.05" stroke-linecap="round" stroke-linejoin="round"/></svg><svg width="6.4" height="7.2" viewBox="0 0 10 10" preserveAspectRatio="none" style="vertical-align:-.9px"><path d="M1 5.2H9" fill="none" stroke="currentColor" stroke-width="1.05" stroke-linecap="round" stroke-linejoin="round"/></svg><svg width="6.4" height="7.2" viewBox="0 0 10 10" preserveAspectRatio="none" style="vertical-align:-.9px"><path d="M1.3 2.6H8.2Q7.8 6.8 3 9.2M9 1.3a.75.75 0 1 0 .01 0" fill="none" stroke="currentColor" stroke-width="1.05" stroke-linecap="round" stroke-linejoin="round"/></svg></div>
  <div class="t" style="left:347px;top:297.0px">true</div>
  <div class="t" style="left:418px;top:297.0px">(empty)</div>
  <div class="t" style="left:493px;top:297.0px">(empty)</div>
  <div class="t" style="left:544px;top:297.0px;width:80.8px;text-align:right;font-size:6.5px;margin-top:1px">2022-09-01 16:08:46</div>
  <div class="row" style="top:308px;height:14px"></div>
  <div class="t lk" style="left:38px;top:311.0px">WakamaTest20910-4-dg</div>
  <div class="t" style="left:160.5px;top:311.0px"><svg width="6.4" height="7.2" viewBox="0 0 10 10" preserveAspectRatio="none" style="vertical-align:-.9px"><path d="M1 1.4H5M1.6 2.8H4.6V9.2H1.6ZM2.6 2.8V5.4M3.6 2.8V5.4M1.6 5.4H4.6M1.6 7.2H4.6M6 1.8H8.6V5H6V8.6Q6 9.2 9.2 9.2" fill="none" stroke="currentColor" stroke-width="1.05" stroke-linecap="round" stroke-linejoin="round"/></svg><svg width="6.4" height="7.2" viewBox="0 0 10 10" preserveAspectRatio="none" style="vertical-align:-.9px"><path d="M1 3H9M5 .8Q4 5 1.4 7.2M3.4 5H8.6V8.2M3.4 5V8.4M6 3.6V9.6" fill="none" stroke="currentColor" stroke-width="1.05" stroke-linecap="round" stroke-linejoin="round"/></svg><svg width="6.4" height="7.2" viewBox="0 0 10 10" preserveAspectRatio="none" style="vertical-align:-.9px"><path d="M4 1.2Q3.2 3.3 1.3 4.6M3.6 2.8H8Q7.6 6.8 2.8 9.2M7.3.6l.6 1.3M8.7.4l.6 1.3" fill="none" stroke="currentColor" stroke-width="1.05" stroke-linecap="round" stroke-linejoin="round"/></svg><svg width="6.4" height="7.2" viewBox="0 0 10 10" preserveAspectRatio="none" style="vertical-align:-.9px"><path d="M3.3 2V5Q3.1 7.6 1.3 9.2M5.6 1.8V8.6Q7.6 7.6 9 5.6" fill="none" stroke="currentColor" stroke-width="1.05" stroke-linecap="round" stroke-linejoin="round"/></svg><svg width="6.4" height="7.2" viewBox="0 0 10 10" preserveAspectRatio="none" style="vertical-align:-.9px"><path d="M1 5.2H9" fill="none" stroke="currentColor" stroke-width="1.05" stroke-linecap="round" stroke-linejoin="round"/></svg><svg width="6.4" height="7.2" viewBox="0 0 10 10" preserveAspectRatio="none" style="vertical-align:-.9px"><path d="M1.3 2.6H8.2Q7.8 6.8 3 9.2M9 1.3a.75.75 0 1 0 .01 0" fill="none" stroke="currentColor" stroke-width="1.05" stroke-linecap="round" stroke-linejoin="round"/></svg></div>
  <div class="t" style="left:347px;top:311.0px">true</div>
  <div class="t" style="left:418px;top:311.0px">(empty)</div>
  <div class="t" style="left:493px;top:311.0px">(empty)</div>
  <div class="t" style="left:544px;top:311.0px;width:80.8px;text-align:right;font-size:6.5px;margin-top:1px">2022-09-01 16:04:22</div>
  <div class="row alt" style="top:322px;height:14px"></div>
  <div class="t lk" style="left:38px;top:325.0px">ServiceNow<svg width="6.4" height="7.2" viewBox="0 0 10 10" preserveAspectRatio="none" style="vertical-align:-.9px"><path d="M1.6 1.6L2.6 2.8M1 4.8H2.6V8Q3 9.2 9.2 9M3.6 1.8H8.6M6.1 .8V8.2M3.8 3.3H8.4V5.8H3.8ZM3.8 4.55H8.4M3.4 6.9H8.8" fill="none" stroke="currentColor" stroke-width="1.05" stroke-linecap="round" stroke-linejoin="round"/></svg><svg width="6.4" height="7.2" viewBox="0 0 10 10" preserveAspectRatio="none" style="vertical-align:-.9px"><path d="M1 3.5H3.6M2.3 1V8.8Q2.3 9.2 1.6 9.1M1 6.6L3.6 5.5M5 .8L4.4 2.8M5 2.3H9M6.2 .8V5.6M5 3.8H9M5 5.6H9M4.8 7H8.6Q8.2 9.6 6.2 9.2M6.6 7Q6.2 9 4.4 9.6" fill="none" stroke="currentColor" stroke-width="1.05" stroke-linecap="round" stroke-linejoin="round"/></svg><svg width="6.4" height="7.2" viewBox="0 0 10 10" preserveAspectRatio="none" style="vertical-align:-.9px"><path d="M2 1.4H8.6V9.2M2 1.4V6Q2 8 1 9.2M2 3.8H8.6M2 6.3H8.6M5.3 1.4V9.2" fill="none" stroke="currentColor" stroke-width="1.05" stroke-linecap="round" stroke-linejoin="round"/></svg><svg width="6.4" height="7.2" viewBox="0 0 10 10" preserveAspectRatio="none" style="vertical-align:-.9px"><path d="M4 1.2Q3.2 3.3 1.3 4.6M3.6 2.8H8Q7.6 6.8 2.8 9.2M7.3.6l.6 1.3M8.7.4l.6 1.3" fill="none" stroke="currentColor" stroke-width="1.05" stroke-linecap="round" stroke-linejoin="round"/></svg><svg width="6.4" height="7.2" viewBox="0 0 10 10" preserveAspectRatio="none" style="vertical-align:-.9px"><path d="M3.3 2V5Q3.1 7.6 1.3 9.2M5.6 1.8V8.6Q7.6 7.6 9 5.6" fill="none" stroke="currentColor" stroke-width="1.05" stroke-linecap="round" stroke-linejoin="round"/></svg><svg width="6.4" height="7.2" viewBox="0 0 10 10" preserveAspectRatio="none" style="vertical-align:-.9px"><path d="M1 5.2H9" fill="none" stroke="currentColor" stroke-width="1.05" stroke-linecap="round" stroke-linejoin="round"/></svg><svg width="6.4" height="7.2" viewBox="0 0 10 10" preserveAspectRatio="none" style="vertical-align:-.9px"><path d="M1.3 2.6H8.2Q7.8 6.8 3 9.2M9 1.3a.75.75 0 1 0 .01 0" fill="none" stroke="currentColor" stroke-width="1.05" stroke-linecap="round" stroke-linejoin="round"/></svg></div>
  <div class="t" style="left:160.5px;top:325.0px"><svg width="6.4" height="7.2" viewBox="0 0 10 10" preserveAspectRatio="none" style="vertical-align:-.9px"><path d="M1 1.4H5M1.6 2.8H4.6V9.2H1.6ZM2.6 2.8V5.4M3.6 2.8V5.4M1.6 5.4H4.6M1.6 7.2H4.6M6 1.8H8.6V5H6V8.6Q6 9.2 9.2 9.2" fill="none" stroke="currentColor" stroke-width="1.05" stroke-linecap="round" stroke-linejoin="round"/></svg><svg width="6.4" height="7.2" viewBox="0 0 10 10" preserveAspectRatio="none" style="vertical-align:-.9px"><path d="M1 3H9M5 .8Q4 5 1.4 7.2M3.4 5H8.6V8.2M3.4 5V8.4M6 3.6V9.6" fill="none" stroke="currentColor" stroke-width="1.05" stroke-linecap="round" stroke-linejoin="round"/></svg><svg width="6.4" height="7.2" viewBox="0 0 10 10" preserveAspectRatio="none" style="vertical-align:-.9px"><path d="M4 1.2Q3.2 3.3 1.3 4.6M3.6 2.8H8Q7.6 6.8 2.8 9.2M7.3.6l.6 1.3M8.7.4l.6 1.3" fill="none" stroke="currentColor" stroke-width="1.05" stroke-linecap="round" stroke-linejoin="round"/></svg><svg width="6.4" height="7.2" viewBox="0 0 10 10" preserveAspectRatio="none" style="vertical-align:-.9px"><path d="M3.3 2V5Q3.1 7.6 1.3 9.2M5.6 1.8V8.6Q7.6 7.6 9 5.6" fill="none" stroke="currentColor" stroke-width="1.05" stroke-linecap="round" stroke-linejoin="round"/></svg><svg width="6.4" height="7.2" viewBox="0 0 10 10" preserveAspectRatio="none" style="vertical-align:-.9px"><path d="M1 5.2H9" fill="none" stroke="currentColor" stroke-width="1.05" stroke-linecap="round" stroke-linejoin="round"/></svg><svg width="6.4" height="7.2" viewBox="0 0 10 10" preserveAspectRatio="none" style="vertical-align:-.9px"><path d="M1.3 2.6H8.2Q7.8 6.8 3 9.2M9 1.3a.75.75 0 1 0 .01 0" fill="none" stroke="currentColor" stroke-width="1.05" stroke-linecap="round" stroke-linejoin="round"/></svg></div>
  <div class="t" style="left:347px;top:325.0px">true</div>
  <div class="t" style="left:418px;top:325.0px">(empty)</div>
  <div class="t" style="left:493px;top:325.0px">(empty)</div>
  <div class="t" style="left:544px;top:325.0px;width:80.8px;text-align:right;font-size:6.5px;margin-top:1px">2022-09-01 15:20:06</div>
  <div class="row" style="top:336px;height:14px"></div>
  <div class="t lk" style="left:38px;top:339.0px">null</div>
  <div class="t" style="left:160.5px;top:339.0px"><svg width="6.4" height="7.2" viewBox="0 0 10 10" preserveAspectRatio="none" style="vertical-align:-.9px"><path d="M1 1.4H5M1.6 2.8H4.6V9.2H1.6ZM2.6 2.8V5.4M3.6 2.8V5.4M1.6 5.4H4.6M1.6 7.2H4.6M6 1.8H8.6V5H6V8.6Q6 9.2 9.2 9.2" fill="none" stroke="currentColor" stroke-width="1.05" stroke-linecap="round" stroke-linejoin="round"/></svg><svg width="6.4" height="7.2" viewBox="0 0 10 10" preserveAspectRatio="none" style="vertical-align:-.9px"><path d="M1 3H9M5 .8Q4 5 1.4 7.2M3.4 5H8.6V8.2M3.4 5V8.4M6 3.6V9.6" fill="none" stroke="currentColor" stroke-width="1.05" stroke-linecap="round" stroke-linejoin="round"/></svg><svg width="6.4" height="7.2" viewBox="0 0 10 10" preserveAspectRatio="none" style="vertical-align:-.9px"><path d="M4 1.2Q3.2 3.3 1.3 4.6M3.6 2.8H8Q7.6 6.8 2.8 9.2M7.3.6l.6 1.3M8.7.4l.6 1.3" fill="none" stroke="currentColor" stroke-width="1.05" stroke-linecap="round" stroke-linejoin="round"/></svg><svg width="6.4" height="7.2" viewBox="0 0 10 10" preserveAspectRatio="none" style="vertical-align:-.9px"><path d="M3.3 2V5Q3.1 7.6 1.3 9.2M5.6 1.8V8.6Q7.6 7.6 9 5.6" fill="none" stroke="currentColor" stroke-width="1.05" stroke-linecap="round" stroke-linejoin="round"/></svg><svg width="6.4" height="7.2" viewBox="0 0 10 10" preserveAspectRatio="none" style="vertical-align:-.9px"><path d="M1 5.2H9" fill="none" stroke="currentColor" stroke-width="1.05" stroke-linecap="round" stroke-linejoin="round"/></svg><svg width="6.4" height="7.2" viewBox="0 0 10 10" preserveAspectRatio="none" style="vertical-align:-.9px"><path d="M1.3 2.6H8.2Q7.8 6.8 3 9.2M9 1.3a.75.75 0 1 0 .01 0" fill="none" stroke="currentColor" stroke-width="1.05" stroke-linecap="round" stroke-linejoin="round"/></svg></div>
  <div class="t" style="left:347px;top:339.0px">true</div>
  <div class="t" style="left:418px;top:339.0px">(empty)</div>
  <div class="t" style="left:493px;top:339.0px">(empty)</div>
  <div class="t" style="left:544px;top:339.0px;width:80.8px;text-align:right;font-size:6.5px;margin-top:1px">2022-09-01 15:20:06</div>
  <div class="row alt" style="top:350px;height:14px"></div>
  <div class="t lk" style="left:38px;top:353.0px">"EXO-Admin"</div>
  <div class="t" style="left:160.5px;top:353.0px"><svg width="6.4" height="7.2" viewBox="0 0 10 10" preserveAspectRatio="none" style="vertical-align:-.9px"><path d="M1 1.4H5M1.6 2.8H4.6V9.2H1.6ZM2.6 2.8V5.4M3.6 2.8V5.4M1.6 5.4H4.6M1.6 7.2H4.6M6 1.8H8.6V5H6V8.6Q6 9.2 9.2 9.2" fill="none" stroke="currentColor" stroke-width="1.05" stroke-linecap="round" stroke-linejoin="round"/></svg><svg width="6.4" height="7.2" viewBox="0 0 10 10" preserveAspectRatio="none" style="vertical-align:-.9px"><path d="M1 3H9M5 .8Q4 5 1.4 7.2M3.4 5H8.6V8.2M3.4 5V8.4M6 3.6V9.6" fill="none" stroke="currentColor" stroke-width="1.05" stroke-linecap="round" stroke-linejoin="round"/></svg><svg width="6.4" height="7.2" viewBox="0 0 10 10" preserveAspectRatio="none" style="vertical-align:-.9px"><path d="M4 1.2Q3.2 3.3 1.3 4.6M3.6 2.8H8Q7.6 6.8 2.8 9.2M7.3.6l.6 1.3M8.7.4l.6 1.3" fill="none" stroke="currentColor" stroke-width="1.05" stroke-linecap="round" stroke-linejoin="round"/></svg><svg width="6.4" height="7.2" viewBox="0 0 10 10" preserveAspectRatio="none" style="vertical-align:-.9px"><path d="M3.3 2V5Q3.1 7.6 1.3 9.2M5.6 1.8V8.6Q7.6 7.6 9 5.6" fill="none" stroke="currentColor" stroke-width="1.05" stroke-linecap="round" stroke-linejoin="round"/></svg><svg width="6.4" height="7.2" viewBox="0 0 10 10" preserveAspectRatio="none" style="vertical-align:-.9px"><path d="M1 5.2H9" fill="none" stroke="currentColor" stroke-width="1.05" stroke-linecap="round" stroke-linejoin="round"/></svg><svg width="6.4" height="7.2" viewBox="0 0 10 10" preserveAspectRatio="none" style="vertical-align:-.9px"><path d="M1.3 2.6H8.2Q7.8 6.8 3 9.2M9 1.3a.75.75 0 1 0 .01 0" fill="none" stroke="currentColor" stroke-width="1.05" stroke-linecap="round" stroke-linejoin="round"/></svg></div>
  <div class="t" style="left:347px;top:353.0px">true</div>
  <div class="t" style="left:418px;top:353.0px">(empty)</div>
  <div class="t" style="left:493px;top:353.0px">(empty)</div>
  <div class="t" style="left:544px;top:353.0px;width:80.8px;text-align:right;font-size:6.5px;margin-top:1px">2022-09-01 15:07:11</div>
  </div>

  <div class="a" style="left:0;top:20px;width:1px;height:386px;background:#cbc7dc"></div>
  <!-- footer -->
  <div class="a" style="left:0;top:387px;width:634px;height:1px;background:#e3e3e6"></div>
</div>

<!-- toolbar icons -->
<svg class="a" style="left:614px;top:31px" width="8" height="8" viewBox="0 0 8 8"><path d="M3.7 1.2C3.85 2.9 4.1 3.3 7.2 3.6 4.1 3.9 3.85 4.3 3.7 6.9 3.55 4.3 3.3 3.9 1 3.6 3.3 3.3 3.55 2.9 3.7 1.2z" fill="#5d62a8" stroke="#5d62a8" stroke-width=".35"/></svg>
<svg class="a" style="left:630.5px;top:30.5px" width="9" height="9" viewBox="0 0 9 9"><circle cx="4.2" cy="4.3" r="3.2" fill="none" stroke="#6368ad" stroke-width=".75"/><path d="M4.2.4v.8M4.2 7.5v.8" stroke="#6368ad" stroke-width=".7"/><rect x="3.2" y="3.4" width="2" height="1.8" fill="none" stroke="#8a8ec0" stroke-width=".5"/></svg>
<svg class="a" style="left:647.5px;top:31.5px" width="8" height="8" viewBox="0 0 8 8"><path d="M3.7.7v3.6M2.5 3.2L3.7 4.4 4.9 3.2" fill="none" stroke="#6368ad" stroke-width=".75"/><path d="M1.1 4.4v1.4a1.2 1.2 0 0 0 1.2 1.2h2.8a1.2 1.2 0 0 0 1.2-1.2V4.4" fill="none" stroke="#6670b8" stroke-width=".75"/></svg>
<!-- select -->
<div class="a" style="left:662.4px;top:27.6px;width:89px;height:14px;background:#fff;border:1.3px solid #6677e0;border-radius:2.5px;box-shadow:0 0 0 .5px #b3bbf0"></div>
<div class="a" style="left:666.5px;top:31px;font-size:6.2px;color:#2e2e2e;line-height:8px">Actions on selected rows...</div>
<svg class="a" style="left:743.8px;top:33.3px" width="5" height="4" viewBox="0 0 5 4"><path d="M.6 .7L2.5 2.7 4.4 .7" fill="none" stroke="#222" stroke-width="1.1"/></svg>
<div class="a" style="left:753.3px;top:27.8px;width:22.6px;height:14px;background:#5254c2;border-radius:2px"></div>
<div class="a" style="left:753.4px;top:31.3px;width:22.5px;text-align:center;font-size:6.5px;font-weight:bold;color:#f4f4ff;line-height:8px">New</div>
<!-- dropdown list -->
<div class="a" style="left:662.4px;top:41.4px;width:89.4px;height:166px;background:#fff;border:1px solid #bdbdbd;box-shadow:1px 1px 3px rgba(0,0,0,.25);overflow:hidden">
  <div class="a" style="left:0;top:8.2px;width:80px;height:7.8px;background:#3a8ff3"></div>
    <div class="dd" style="left:3.3px;top:2.00px;color:#444">Actions on selected rows...</div>
  <div class="dd" style="left:7.4px;top:9.01px;color:#fff">Delete</div>
  <div class="dd" style="left:7.4px;top:17.22px;color:#333">Delete with preview...</div>
  <div class="dd" style="left:7.4px;top:25.43px;color:#333">Create Application File</div>
  <div class="dd" style="left:5.2px;top:33.64px;color:#333;font-weight:bold">Assign Tag:</div>
  <div class="dd" style="left:9.3px;top:41.85px;color:#333">New tag</div>
  <div class="dd" style="left:13.0px;top:50.06px;color:#333">Other</div>
  <div class="dd" style="left:13.0px;top:58.27px;color:#333">Feature</div>
  <div class="dd" style="left:13.0px;top:66.48px;color:#333">Low Priority</div>
  <div class="dd" style="left:13.0px;top:74.69px;color:#333">Defect</div>
  <div class="dd" style="left:13.0px;top:82.90px;color:#333">Idea</div>
  <div class="dd" style="left:13.0px;top:91.11px;color:#333">Request</div>
  <div class="dd" style="left:13.0px;top:99.32px;color:#333">Story</div>
  <div class="dd" style="left:13.0px;top:107.53px;color:#333">High Priority</div>
  <div class="dd" style="left:7.8px;top:115.74px;color:#333">More...</div>
  <div class="dd" style="left:5.0px;top:123.95px;color:#333;font-weight:bold">Remove Tag:</div>
  <div class="dd" style="left:13.0px;top:132.16px;color:#333">Other</div>
  <div class="dd" style="left:13.0px;top:140.37px;color:#333">Feature</div>
  <div class="dd" style="left:13.0px;top:148.58px;color:#333">Low Priority</div>
  <div class="dd" style="left:13.0px;top:156.79px;color:#333">Defect</div>
  <div class="a" style="left:80.5px;top:0;width:7px;height:165px;background:#f1f1f1"></div>
  <div class="a" style="left:81px;top:9px;width:6.1px;height:117.5px;background:#c1c1c1"></div>
  <svg class="a" style="left:82px;top:158px" width="5" height="4" viewBox="0 0 5 4"><path d="M.5 .5h4L2.5 3z" fill="#555"/></svg>
</div>

<!-- red boxes -->
<div class="a" style="left:142px;top:90px;width:517.5px;height:27px;border:2px solid #ee1111;border-radius:3.5px"></div>
<div class="a" style="left:659.3px;top:46px;width:92px;height:15.2px;border:2px solid #ee1111;border-radius:3px"></div>
<!-- pagination -->
<svg class="a" style="left:398px;top:420px" width="7" height="5" viewBox="0 0 7 5"><path d="M3.2 .3L.6 2.5l2.6 2.2zM6.4 .3L3.8 2.5l2.6 2.2z" fill="#c5c7dd"/></svg>
<svg class="a" style="left:415.5px;top:420px" width="4" height="5" viewBox="0 0 4 5"><path d="M3.2 .3L.6 2.5l2.6 2.2z" fill="#c5c7dd"/></svg>
<div class="a" style="left:426.2px;top:415.1px;width:36.5px;height:14.6px;background:#fff;border:1px solid #a8a8a8;border-radius:2.5px"></div>
<div class="a" style="left:457.5px;top:418.5px;font-size:6.5px;color:#333;line-height:8px">1</div>
<div class="a" style="left:465px;top:418.5px;font-size:6.5px;color:#333;line-height:8px">to 20 of 115</div>
<svg class="a" style="left:508px;top:420px" width="4" height="5" viewBox="0 0 4 5"><path d="M.6 .3l2.6 2.2L.6 4.7z" fill="#3d4190"/></svg>
<svg class="a" style="left:522px;top:420px" width="7" height="5" viewBox="0 0 7 5"><path d="M.6 .3l2.6 2.2L.6 4.7zM3.8 .3l2.6 2.2-2.6 2.2z" fill="#3d4190"/></svg>
<svg class="a" style="left:767px;top:418.5px" width="7" height="8" viewBox="0 0 7 8"><circle cx="3.4" cy="4.3" r="2.8" fill="none" stroke="#5d62a8" stroke-width=".75"/><path d="M3.4 2.8v1.6M2.6 .6h1.6" fill="none" stroke="#5d62a8" stroke-width=".7"/></svg>
<!-- tooltip -->
<div class="a" style="left:142.3px;top:10.7px;width:176.7px;height:30px;background:#222;border-radius:5px"></div>
<svg class="a" style="left:226px;top:7px" width="10" height="5" viewBox="0 0 10 5"><path d="M0 5L5 0l5 5z" fill="#222"/></svg>
<svg class="a" style="left:152px;top:18px" width="17" height="16" viewBox="0 0 17 16"><rect x="5" y="3.9" width="10.2" height="8.3" rx="1.2" fill="#fff"/><path d="M1.2 1.5h4.2M3.5 1.5v13.3M1.2 14.8h4.2" stroke="#fff" stroke-width="1" fill="none"/><text x="10.2" y="11" font-size="10" text-anchor="middle" fill="#3a3a3a" font-family="Liberation Sans">a</text></svg>
<svg class="a" style="left:0;top:0" width="320" height="40" viewBox="0 0 320 40"><path d="M180.5 19.4 Q179.5 25.5 175.8 29.6 M183.7 19.8 Q186.5 25 188.6 29.6 M199.8 18.9 Q195.5 23.6 189.6 25.8 M196.2 22.6 V30.2 M203.6 19.5 H211.4 M203.2 23.1 H213.4 Q212 28.5 205 29.8 M226.8 18.9 Q222.5 23.6 216.6 25.8 M223.2 22.6 V30.2 M233.6 18.1 V30.2 M233.8 22.4 Q238.5 23.8 241.4 25.8 M247.1 18.4 L247.7 23.2 M254.1 21.2 Q245 23.6 245.3 26.8 Q245.8 29.3 254.6 29.1 M256.6 20.2 H266.4 V28.7 H256.6 M279.2 19.3 Q276 25.5 269.4 29.2 M271.8 21.8 Q277.5 24.5 280.2 27.8 M283.6 19.3 L287.3 21.2 M283.6 29.2 Q291 27.5 294.6 23 M300.1 18.3 V29.8 M300.3 22.8 Q305 24 307.7 25.9" fill="none" stroke="#fff" stroke-width="1.3" stroke-linecap="round" stroke-linejoin="round"/></svg>
</body></html>
